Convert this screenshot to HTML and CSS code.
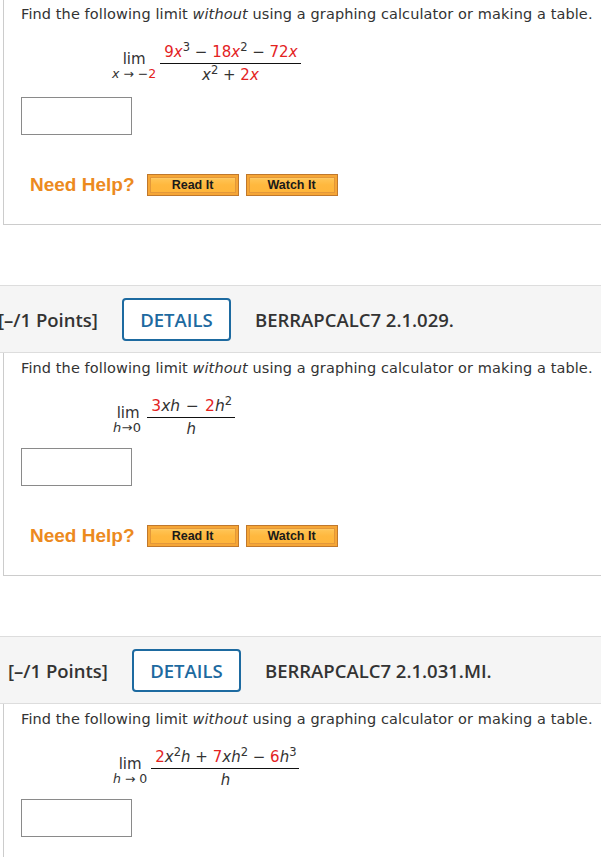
FILE: index.html
```html
<!DOCTYPE html>
<html>
<head>
<meta charset="utf-8">
<link rel="stylesheet" href="styles.css">
</head>
<body>
<div class="panel panel--first">
  <p class="q">Find the following limit <i>without</i> using a graphing calculator or making a table.</p>
  <div class="math math--a">
    <div class="lim"><span class="limw">lim</span><span class="sub"><i>x</i> &rarr; &minus;<span class="r">2</span></span></div>
    <div class="frac">
      <div class="num"><span class="r">9<i>x</i></span><sup>3</sup> &minus; <span class="r">18<i>x</i></span><sup>2</sup> &minus; <span class="r">72<i>x</i></span></div>
      <div class="den"><i>x</i><sup>2</sup> + <span class="r">2<i>x</i></span></div>
    </div>
  </div>
  <div class="answer answer--a"></div>
  <div class="help">
    <span class="need">Need Help?</span>
    <span class="btn">Read It</span>
    <span class="btn">Watch It</span>
  </div>
</div>

<div class="qhead qhead--shift">
  <span class="pts">[&ndash;/1 Points]</span>
  <span class="details">DETAILS</span>
  <span class="code">BERRAPCALC7 2.1.029.</span>
</div>
<div class="panel">
  <p class="q">Find the following limit <i>without</i> using a graphing calculator or making a table.</p>
  <div class="math math--b">
    <div class="lim"><span class="limw">lim</span><span class="sub sub--tight"><i>h</i>&rarr;0</span></div>
    <div class="frac frac--wide">
      <div class="num"><span class="r">3</span><i>xh</i> &minus; <span class="r">2</span><i>h</i><sup>2</sup></div>
      <div class="den"><i>h</i></div>
    </div>
  </div>
  <div class="answer"></div>
  <div class="help">
    <span class="need">Need Help?</span>
    <span class="btn">Read It</span>
    <span class="btn">Watch It</span>
  </div>
</div>

<div class="qhead">
  <span class="pts">[&ndash;/1 Points]</span>
  <span class="details">DETAILS</span>
  <span class="code">BERRAPCALC7 2.1.031.MI.</span>
</div>
<div class="panel">
  <p class="q">Find the following limit <i>without</i> using a graphing calculator or making a table.</p>
  <div class="math math--b">
    <div class="lim"><span class="limw">lim</span><span class="sub"><i>h</i> &rarr; 0</span></div>
    <div class="frac">
      <div class="num"><span class="r">2</span><i>x</i><sup>2</sup><i>h</i> + <span class="r">7</span><i>xh</i><sup>2</sup> &minus; <span class="r">6</span><i>h</i><sup>3</sup></div>
      <div class="den"><i>h</i></div>
    </div>
  </div>
  <div class="answer"></div>
</div>
</body>
</html>
```
FILE: styles.css
```css
html, body {
  margin: 0;
  padding: 0;
  background: #ffffff;
  overflow: hidden;
}
body {
  font-family: "DejaVu Sans", "Bitstream Vera Sans", Verdana, sans-serif;
  color: #333333;
}
.panel {
  margin-left: 3px;
  border-left: 1px solid #cccccc;
  border-bottom: 1px solid #cccccc;
  padding: 7px 0 28px 17px;
  margin-bottom: 60px;
}
.panel--first {
  padding-top: 6px;
}
.q {
  margin: 0;
  font-size: 14.5px;
  line-height: 17px;
  letter-spacing: 0.1px;
}
.math {
  display: flex;
  align-items: center;
  margin-top: 20px;
  margin-left: 91px;
  font-size: 15px;
}
.math--b {
  margin-left: 92px;
}
.lim {
  display: flex;
  flex-direction: column;
  align-items: center;
  margin-right: 4px;
  padding-top: 4px;
}
.limw {
  line-height: 15px;
}
.sub {
  font-size: 12.5px;
  line-height: 13px;
}
.sub--tight {
  font-size: 13px;
  letter-spacing: 0.3px;
  margin-right: 2px;
}
.frac {
  display: flex;
  flex-direction: column;
  align-items: stretch;
  text-align: center;
}
.frac--wide .num {
  font-size: 15.5px;
  word-spacing: 1px;
}
.num {
  line-height: 18px;
  padding: 0 3px 2px 4px;
  border-bottom: 1px solid #111111;
  white-space: nowrap;
}
.den {
  line-height: 18px;
  padding-top: 2px;
}
sup {
  font-size: 11.5px;
  line-height: 0;
  vertical-align: 6px;
}
.r {
  color: #e3231f;
}
.answer {
  width: 109px;
  height: 36px;
  border: 1px solid #8a8a8a;
  margin-top: 10px;
}
.answer--a {
  margin-top: 13px;
}
.help {
  display: flex;
  align-items: center;
  margin-top: 39px;
  margin-left: 9px;
}
.need {
  font-family: "Liberation Sans", Arial, sans-serif;
  font-weight: bold;
  font-size: 19px;
  color: #ec8a1e;
  margin-right: 12px;
}
.btn {
  box-sizing: border-box;
  width: 92px;
  height: 22px;
  margin-right: 7px;
  display: flex;
  align-items: center;
  justify-content: center;
  font-family: "Liberation Sans", Arial, sans-serif;
  font-weight: bold;
  font-size: 12.5px;
  color: #1a1a1a;
  border: 1px solid #c0782c;
  background: linear-gradient(#ffcb62, #ffb83e 50%, #ffb53a);
  box-shadow: inset 0 0 0 2px #f6a636, inset 0 0 0 3px #e3983a, inset 0 4px 2px -1px #ffd486;
}
.qhead {
  display: flex;
  align-items: center;
  height: 66px;
  background: #f5f5f5;
  border-top: 1px solid #dddddd;
  border-bottom: 1px solid #dddddd;
  padding-left: 8px;
  font-family: "Open Sans", sans-serif;
  font-size: 18.5px;
  font-weight: 600;
  color: #333333;
  white-space: nowrap;
}
.qhead--shift {
  padding-left: 0;
}
.qhead--shift .pts {
  margin-left: -2px;
}
.details {
  box-sizing: border-box;
  height: 43px;
  width: 109px;
  margin: 0 24px;
  display: flex;
  align-items: center;
  justify-content: center;
  border: 2px solid #1d6aa0;
  border-radius: 4px;
  color: #1d6aa0;
  background: #ffffff;
}
```
